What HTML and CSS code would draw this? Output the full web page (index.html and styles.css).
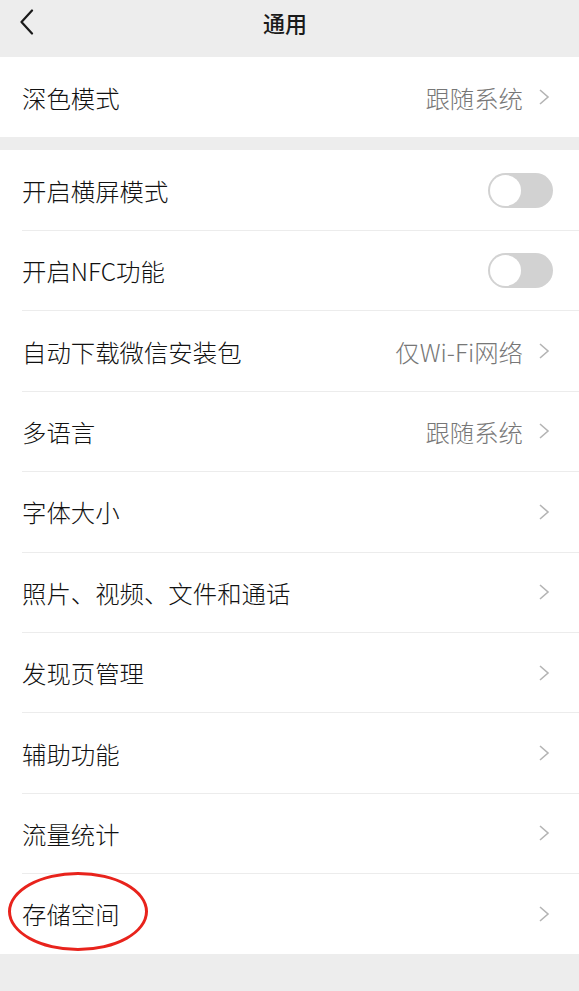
FILE: index.html
```html
<!DOCTYPE html>
<html lang="zh-CN">
<head>
<meta charset="utf-8">
<title>通用</title>
<link rel="stylesheet" href="styles.css">
</head>
<body>
<div class="page">
  <header class="nav">
    <span class="back">
      <svg width="16" height="26" viewBox="0 0 16 26"><path d="M13 1.5 L2.5 13 L13 24.5" fill="none" stroke="#1a1a1a" stroke-width="2.2" stroke-linecap="round" stroke-linejoin="round"/></svg>
    </span>
    <h1 class="title">通用</h1>
  </header>

  <section class="group first">
    <div class="row"><div class="row-inner">
      <span class="label">深色模式</span>
      <span class="value">跟随系统</span>
      <span class="chev"><svg width="12" height="18" viewBox="0 0 12 18"><path d="M2 2 L10 9 L2 16" fill="none" stroke="#b4b4b4" stroke-width="1.6"/></svg></span>
    </div></div>
  </section>

  <section class="group second">
    <div class="row"><div class="row-inner">
      <span class="label">开启横屏模式</span>
      <span class="switch"><span class="knob"></span></span>
    </div></div>
    <div class="row"><div class="row-inner">
      <span class="label">开启NFC功能</span>
      <span class="switch"><span class="knob"></span></span>
    </div></div>
    <div class="row"><div class="row-inner">
      <span class="label">自动下载微信安装包</span>
      <span class="value">仅Wi-Fi网络</span>
      <span class="chev"><svg width="12" height="18" viewBox="0 0 12 18"><path d="M2 2 L10 9 L2 16" fill="none" stroke="#b4b4b4" stroke-width="1.6"/></svg></span>
    </div></div>
    <div class="row"><div class="row-inner">
      <span class="label">多语言</span>
      <span class="value">跟随系统</span>
      <span class="chev"><svg width="12" height="18" viewBox="0 0 12 18"><path d="M2 2 L10 9 L2 16" fill="none" stroke="#b4b4b4" stroke-width="1.6"/></svg></span>
    </div></div>
    <div class="row"><div class="row-inner">
      <span class="label">字体大小</span>
      <span class="chev"><svg width="12" height="18" viewBox="0 0 12 18"><path d="M2 2 L10 9 L2 16" fill="none" stroke="#b4b4b4" stroke-width="1.6"/></svg></span>
    </div></div>
    <div class="row"><div class="row-inner">
      <span class="label">照片、视频、文件和通话</span>
      <span class="chev"><svg width="12" height="18" viewBox="0 0 12 18"><path d="M2 2 L10 9 L2 16" fill="none" stroke="#b4b4b4" stroke-width="1.6"/></svg></span>
    </div></div>
    <div class="row"><div class="row-inner">
      <span class="label">发现页管理</span>
      <span class="chev"><svg width="12" height="18" viewBox="0 0 12 18"><path d="M2 2 L10 9 L2 16" fill="none" stroke="#b4b4b4" stroke-width="1.6"/></svg></span>
    </div></div>
    <div class="row"><div class="row-inner">
      <span class="label">辅助功能</span>
      <span class="chev"><svg width="12" height="18" viewBox="0 0 12 18"><path d="M2 2 L10 9 L2 16" fill="none" stroke="#b4b4b4" stroke-width="1.6"/></svg></span>
    </div></div>
    <div class="row"><div class="row-inner">
      <span class="label">流量统计</span>
      <span class="chev"><svg width="12" height="18" viewBox="0 0 12 18"><path d="M2 2 L10 9 L2 16" fill="none" stroke="#b4b4b4" stroke-width="1.6"/></svg></span>
    </div></div>
    <div class="row marked"><div class="row-inner">
      <span class="label">存储空间</span>
      <span class="chev"><svg width="12" height="18" viewBox="0 0 12 18"><path d="M2 2 L10 9 L2 16" fill="none" stroke="#b4b4b4" stroke-width="1.6"/></svg></span>
      <span class="circle"></span>
    </div></div>
  </section>
</div>
</body>
</html>
```
FILE: styles.css
```css
html, body {
  margin: 0;
  padding: 0;
  background: #ededed;
}

body {
  font-family: "Noto Sans CJK SC", "Noto Sans", sans-serif;
  color: #1a1a1a;
}

.page {
  width: 579px;
  min-height: 991px;
  background: #ededed;
}

.nav {
  position: relative;
  height: 57px;
  display: flex;
  justify-content: center;
  padding-right: 9px;
  box-sizing: border-box;
}

.back {
  position: absolute;
  left: 19px;
  top: 9px;
  display: block;
  line-height: 0;
}

.title {
  margin: 0;
  height: 44px;
  line-height: 44px;
  font-size: 22px;
  font-weight: 500;
  color: #1a1a1a;
}

.group {
  background: #fff;
}

.group.second {
  margin-top: 13px;
}

.row {
  padding-left: 22px;
  position: relative;
}

.row-inner {
  display: flex;
  align-items: center;
  height: 80.4px;
  box-sizing: border-box;
  padding-right: 29px;
  border-top: 1px solid #ececec;
}

.group.first .row-inner,
.group.second .row:first-child .row-inner {
  border-top: none;
  height: 80px;
}

.label {
  flex: 1;
  font-size: 24.4px;
  font-weight: 300;
  color: #111;
  white-space: nowrap;
}

.value {
  font-size: 24.4px;
  font-weight: 300;
  color: #777;
  margin-right: 15px;
  white-space: nowrap;
}

.chev {
  display: block;
  line-height: 0;
}

.switch {
  position: relative;
  display: block;
  width: 65px;
  height: 35px;
  border-radius: 18px;
  background: #d2d2d2;
  margin-right: -3px;
}

.knob {
  position: absolute;
  left: 2px;
  top: 2px;
  width: 31px;
  height: 31px;
  border-radius: 50%;
  background: #fff;
}

.circle {
  position: absolute;
  left: 8px;
  top: -1px;
  width: 140px;
  height: 79px;
  box-sizing: border-box;
  border: 3px solid #e8231c;
  border-radius: 50%;
}
```
